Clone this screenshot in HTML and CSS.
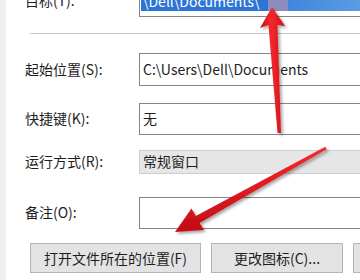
FILE: index.html
```html
<!DOCTYPE html>
<html lang="zh-CN">
<head>
<meta charset="utf-8">
<title>属性</title>
<link rel="stylesheet" href="styles.css">
</head>
<body>
<div class="window">
  <div class="form">
    <div class="row row-target">
      <span class="label">目标(T):</span>
      <div class="box box-target">
        <span class="sel sel-text">\Dell\Documents\</span><span class="sel sel-mid"></span><span class="sel sel-rest"></span>
      </div>
    </div>
    <div class="sep"></div>
    <div class="row row-start">
      <span class="label">起始位置(S):</span>
      <div class="box box-tall">C:\Users\Dell\Documents</div>
    </div>
    <div class="row row-hotkey">
      <span class="label">快捷键(K):</span>
      <div class="box">无</div>
    </div>
    <div class="row row-run">
      <span class="label">运行方式(R):</span>
      <div class="box combo">常规窗口</div>
    </div>
    <div class="row row-comment">
      <span class="label">备注(O):</span>
      <div class="box"></div>
    </div>
    <div class="buttons">
      <button class="btn btn-open">打开文件所在的位置(F)</button>
      <button class="btn btn-icon">更改图标(C)...</button>
      <button class="btn btn-adv">高级(D)...</button>
    </div>
  </div>
  <svg class="arrows" width="360" height="280" viewBox="0 0 360 280">
    <defs>
      <linearGradient id="redV" x1="0" y1="0" x2="1" y2="0">
        <stop offset="0" stop-color="#c80d14"/>
        <stop offset="0.45" stop-color="#f5282d"/>
        <stop offset="1" stop-color="#cc1016"/>
      </linearGradient>
      <linearGradient id="redD" x1="0" y1="0" x2="0" y2="1">
        <stop offset="0" stop-color="#f52a2f"/>
        <stop offset="1" stop-color="#c20d13"/>
      </linearGradient>
      <filter id="shadow" x="-30%" y="-30%" width="160%" height="160%">
        <feDropShadow dx="2" dy="2" stdDeviation="1.6" flood-color="#000" flood-opacity="0.35"/>
      </filter>
    </defs>
    <polygon filter="url(#shadow)" fill="url(#redV)" points="272,7 285,26 277.5,25 281,133 277.5,133 268.5,25 260,28"/>
    <polygon filter="url(#shadow)" fill="url(#redD)" points="175,232 191.5,208.5 195.8,215.9 325.3,146.7 326.7,149.3 199.6,222.9 204,230"/>
  </svg>
</div>
</body>
</html>
```
FILE: styles.css
```css
html, body {
  margin: 0;
  padding: 0;
  background: #ffffff;
}
.window {
  position: relative;
  width: 360px;
  height: 280px;
  overflow: hidden;
  background: #ffffff;
  border-left: 6px solid #efefef;
  box-sizing: border-box;
  font-family: "Noto Sans CJK SC", "Noto Sans", sans-serif;
  font-size: 14px;
  color: #1e1e1e;
}
.form {
  width: 440px;
  padding-left: 19px;
  margin-top: -16px;
}
.row {
  display: grid;
  grid-template-columns: 114px 1fr;
  align-items: center;
}
.label {
  white-space: nowrap;
  line-height: 20px;
  margin-top: -2px;
}
.box {
  height: 32px;
  box-sizing: border-box;
  border: 1px solid #858585;
  background: #fff;
  display: flex;
  align-items: center;
  padding-left: 3px;
  padding-bottom: 2px;
  white-space: nowrap;
  line-height: 20px;
}
.box-target {
  height: 33px;
  padding-left: 1px;
  padding-bottom: 0;
}
.box-tall { height: 33px; }
.sel {
  display: block;
  height: 20px;
  line-height: 20px;
}
.sel-text {
  background: #2c75d6;
  color: #ffffff;
  padding-left: 2px;
  padding-right: 8px;
}
.sel-mid {
  width: 20px;
  background: #8b8dbf;
}
.sel-rest {
  flex: 1;
  background: linear-gradient(90deg, #3f87dc, #5a9be3 40%, #4d92df);
}
.sep {
  height: 1px;
  background: #c9c9c9;
  margin: 16px 0 19px 5px;
}
.row-hotkey { margin-top: 17px; }
.row-run { margin-top: 15px; }
.combo {
  height: 24px;
  background: #e6e6e6;
  border-color: #cfcfcf;
}
.row-comment { margin-top: 23px; }
.buttons {
  display: flex;
  gap: 10px;
  margin-top: 14px;
  margin-left: 5px;
}
.btn {
  height: 30px;
  box-sizing: border-box;
  border: 1px solid #b4b4b4;
  background: #e3e3e3;
  font-family: "Noto Sans CJK SC", "Noto Sans", sans-serif;
  font-size: 14px;
  color: #1e1e1e;
  padding: 0;
  flex: none;
}
.btn-open { width: 171px; }
.btn-icon { width: 132px; }
.btn-adv { width: 132px; }
.arrows {
  position: absolute;
  left: -6px;
  top: 0;
}
```
